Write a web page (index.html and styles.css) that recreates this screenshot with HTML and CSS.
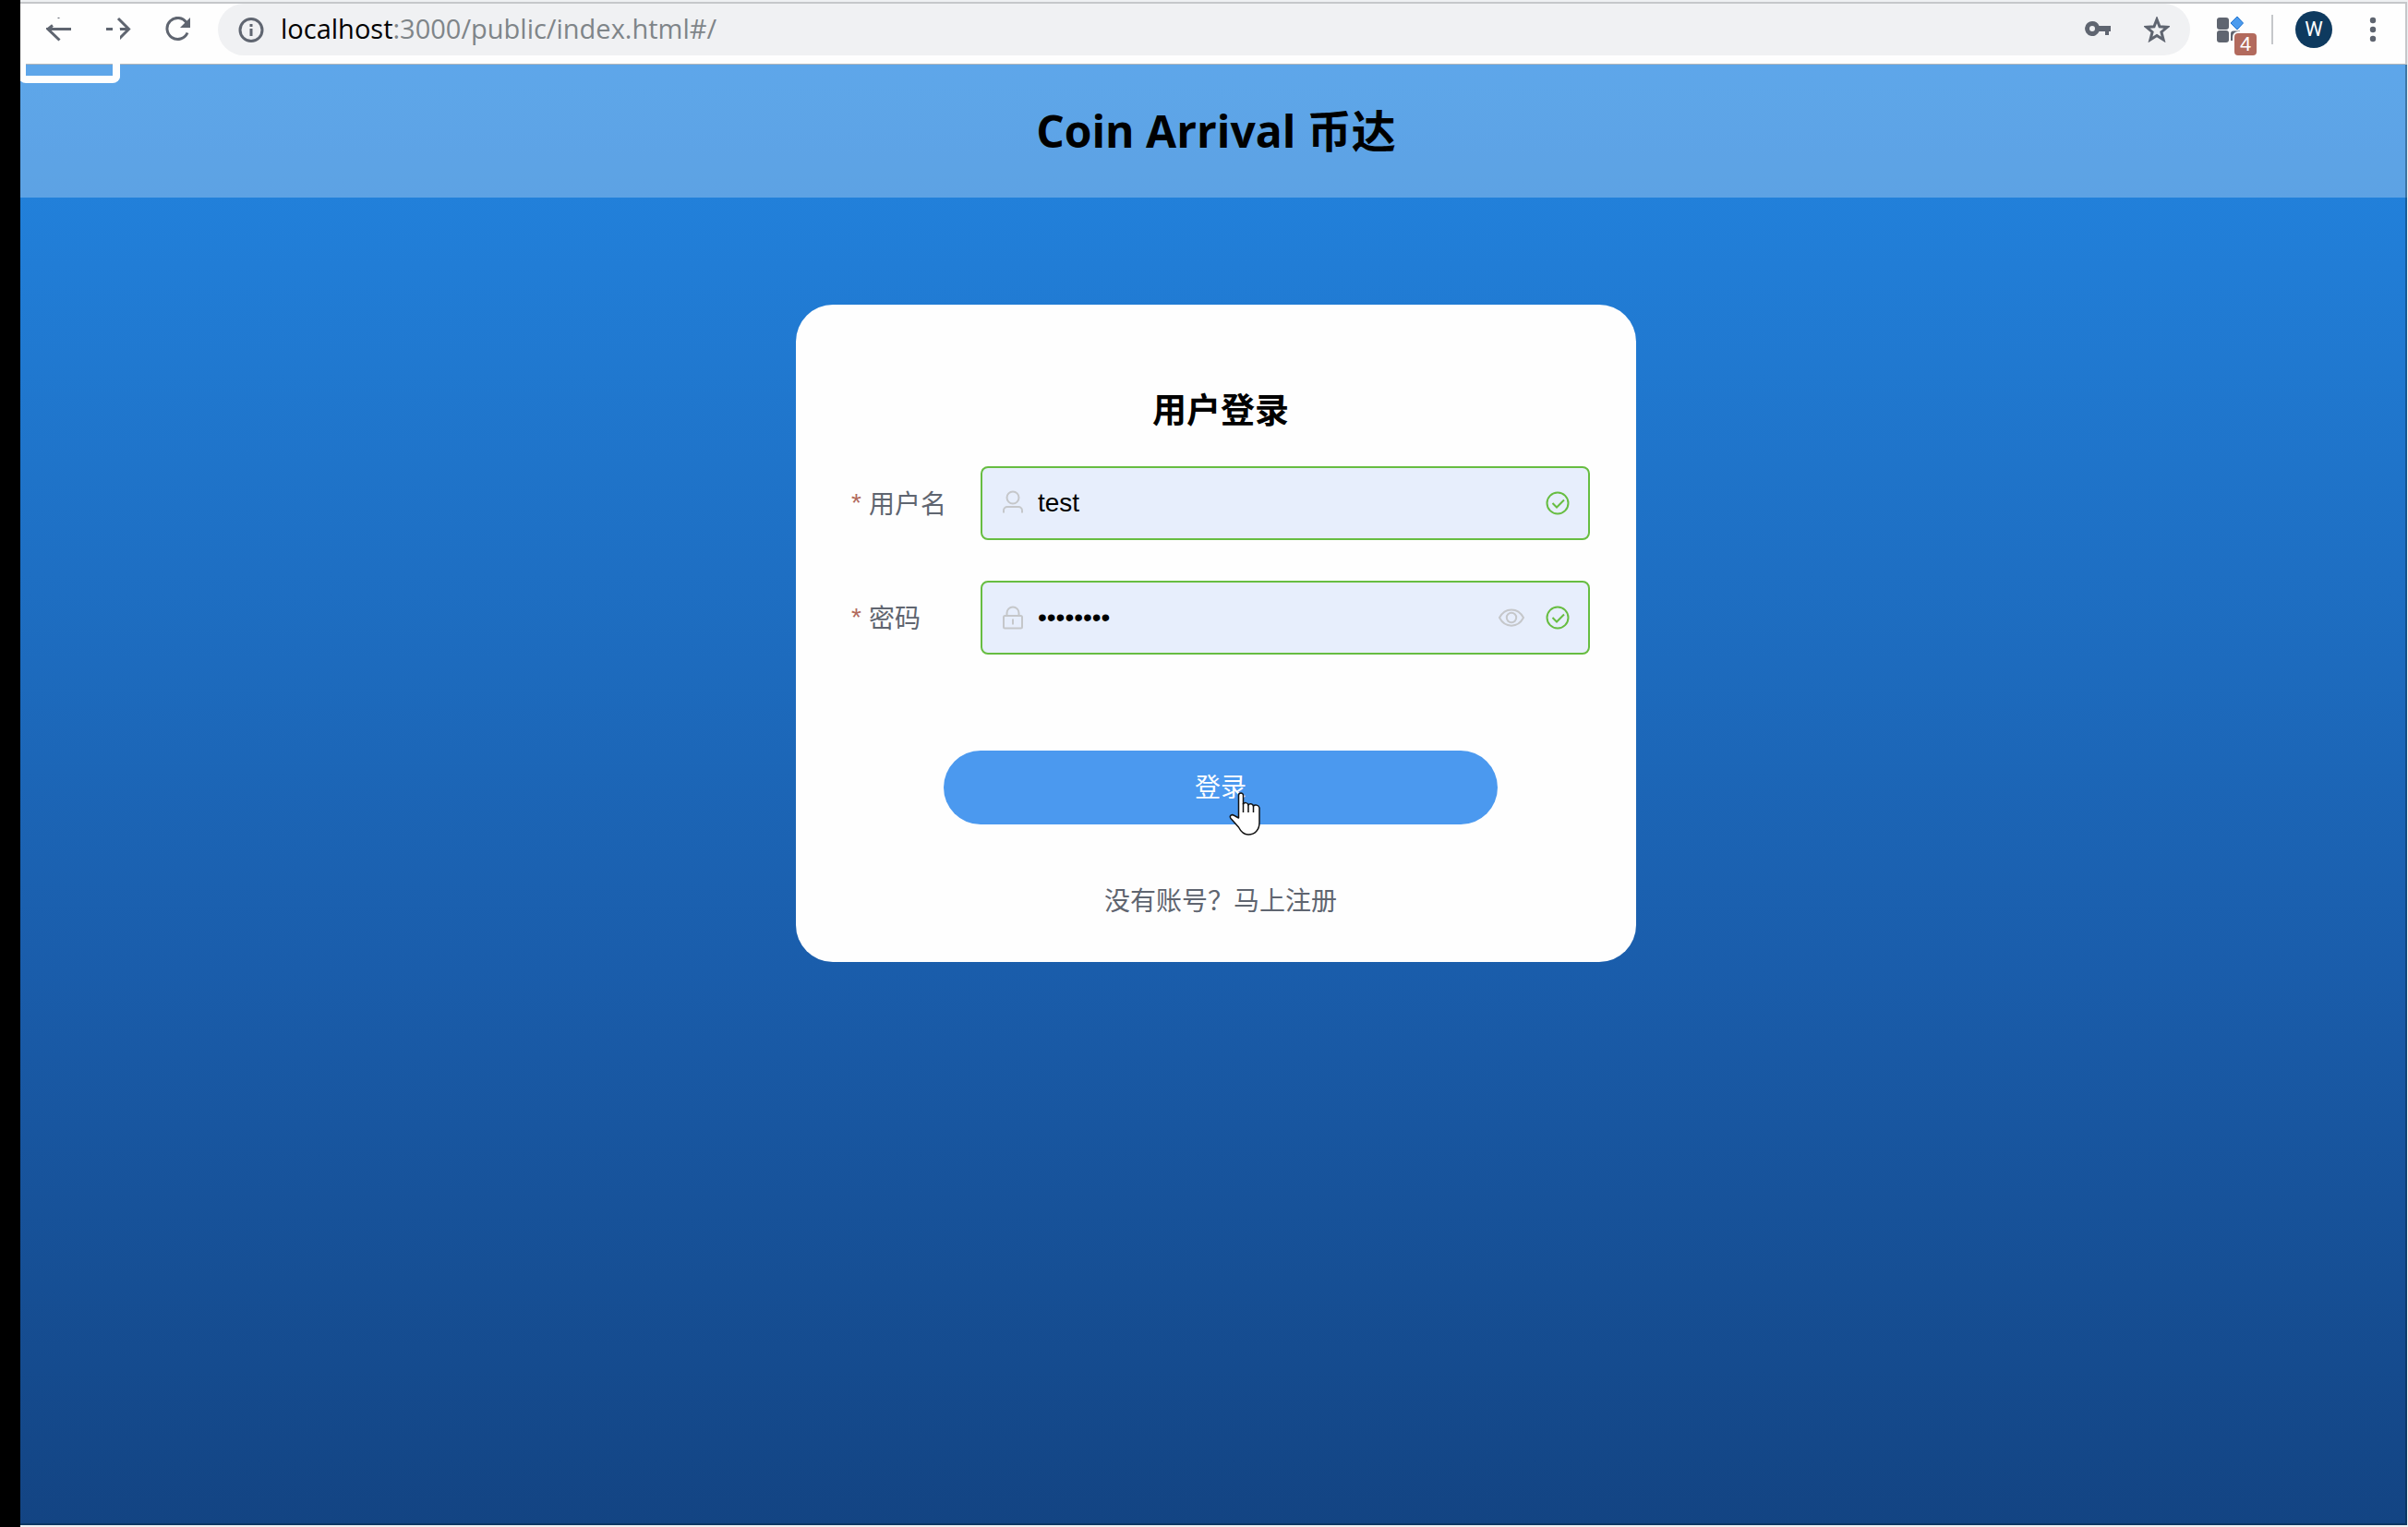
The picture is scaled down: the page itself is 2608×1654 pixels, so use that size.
FILE: index.html
```html
<!DOCTYPE html>
<html lang="zh-CN">
<head>
<meta charset="utf-8">
<title>Coin Arrival 币达</title>
<meta name="viewport" content="width=device-width, initial-scale=1">
<link rel="stylesheet" href="styles.css">
</head>
<body>
<div class="window">
  <div class="toolbar">
    <nav class="nav" aria-label="Browser">
      <button class="icon-button" type="button" aria-label="Back">
        <svg class="icon" viewBox="0 0 28 28"><path d="M27 13.500H2L14.500 25.500M2 13.500l5-4" class="line"/><path d="M12.500 1.500h2" class="hair"/></svg>
      </button>
      <button class="icon-button" type="button" aria-label="Forward">
        <svg class="icon" viewBox="0 0 28 28"><path d="M1 13.500h25M14 2l11.500 11.500L14 25" class="line"/></svg>
      </button>
      <button class="icon-button" type="button" aria-label="Reload">
        <svg class="icon" viewBox="0 0 28 28"><path d="M24 6.500A11.500 11.500 0 1 0 25 17.500" class="line"/><path d="M28 1V12H17z"/></svg>
      </button>
    </nav>
    <div class="address">
      <svg class="icon" viewBox="0 0 28 28"><circle cx="14" cy="14.500" r="12" class="line"/><path d="M12.500 8h3v3h-3zM12.500 13h3v8h-3z"/></svg>
      <span class="url"><span class="host">localhost</span>:3000/public/index.html#/</span>
      <button class="icon-button" type="button" aria-label="Passwords">
        <svg class="icon" viewBox="0 0 28 28"><path fill-rule="evenodd" d="M8 5a8 8 0 1 0 7.500 11H22v4h4v-4h2v-6H15.500A8 8 0 0 0 8 5zm0 5a3 3 0 1 1 0 6 3 3 0 0 1 0-6z"/></svg>
      </button>
      <button class="icon-button" type="button" aria-label="Bookmark">
        <svg class="icon" viewBox="0 0 28 28"><path d="M14 3l3 7.800 8.300.6-6.400 5.300 2.200 8.300-7.100-4.500L6.900 25l2.200-8.300-6.400-5.300 8.300-.6z" class="line"/></svg>
      </button>
    </div>
    <button class="extension" type="button" aria-label="Extension">
      <svg class="extension-icon" viewBox="0 0 46 56"><rect x="1" y="15" width="13" height="13" rx="3"/><rect x="1" y="29" width="13" height="13" rx="3"/><path d="M26 29.500h-7a3 3 0 0 0-3 3V40h3v-7h7z"/><path d="M23 14l6.500 7-6.500 7-7-7z" fill="#4b9bee" stroke="#1f73d0" stroke-linejoin="round"/></svg>
      <span class="count">4</span>
    </button>
    <span class="divider"></span>
    <button class="avatar" type="button">W</button>
    <button class="menu" type="button" aria-label="Menu">
      <svg class="menu-icon" viewBox="0 0 8 28"><circle cx="4" cy="4" r="3.200"/><circle cx="4" cy="14" r="3.200"/><circle cx="4" cy="24" r="3.200"/></svg>
    </button>
  </div>
  <div class="page">
    <header class="banner"><h1 class="brand">Coin Arrival 币达</h1></header>
    <main class="main">
      <form class="card">
        <h2 class="title">用户登录</h2>
        <div class="row">
          <label class="label" for="username"><span class="required">*</span>用户名</label>
          <div class="field">
            <svg class="field-icon" viewBox="0 0 28 28"><circle cx="14" cy="8" r="6.500"/><path d="M4 24.500v-2.500a4 4 0 0 1 4-4h12a4 4 0 0 1 4 4v2.500"/></svg>
            <input class="input" id="username" type="text" value="test">
            <svg class="field-icon valid" viewBox="0 0 28 28"><circle cx="14" cy="14" r="11.500"/><path d="M8.500 14l4.500 4.500 8-8"/></svg>
          </div>
        </div>
        <div class="row">
          <label class="label" for="password"><span class="required">*</span>密码</label>
          <div class="field">
            <svg class="field-icon" viewBox="0 0 28 28"><rect x="4" y="12" width="20" height="13.500" rx="1.500"/><path d="M7.500 12V9a6.500 6.500 0 0 1 13 0v3M14 15.500v6"/></svg>
            <input class="input" id="password" type="password" value="password">
            <svg class="field-icon" viewBox="0 0 28 28"><path d="M1 14C7 2.500 21 2.500 27 14 21 25.500 7 25.500 1 14z"/><circle cx="14" cy="14" r="5.200"/></svg>
            <svg class="field-icon valid" viewBox="0 0 28 28"><circle cx="14" cy="14" r="11.500"/><path d="M8.500 14l4.500 4.500 8-8"/></svg>
          </div>
        </div>
        <div class="actions">
          <button class="submit" type="button">登录</button>
          <svg class="pointer" viewBox="0 0 36 48"><path d="M10.500 28V3.500a2.500 2.500 0 0 1 5 0V13c1-2 5-2 5.500 1 1-2 5-1.500 5.500 1 1.500-2 6-1 6.500 2V33c0 8-5 13-12 13-5 0-8-3-10.500-8L2 28.500c-2-3 1-5 4-3z" fill="#fff" stroke="#111" stroke-width="1.500" stroke-linejoin="round"/><path d="M15.500 12v10M21 13v9M26.500 14v8" fill="none" stroke="#111" stroke-width="1.500"/></svg>
        </div>
        <a class="register" href="#/register">没有账号？马上注册</a>
      </form>
    </main>
  </div>
  <span class="ghost"></span>
</div>
</body>
</html>
```
FILE: styles.css
```css
* {
  box-sizing: border-box;
}

body {
  margin: 0;
  min-height: 100vh;
  display: flex;
  padding: 2px 1px 2px 0;
  border-left: 22px solid #000;
  background: #eef0f2;
  color: #000;
  font-family: "Open Sans", "Noto Sans CJK SC", sans-serif;
}

button {
  padding: 0;
  border: 0;
  background: none;
  font: inherit;
  color: inherit;
}

svg {
  display: block;
  flex: none;
}

.window {
  position: relative;
  flex: 1;
  min-width: 0;
  display: flex;
  flex-direction: column;
}

/* Browser toolbar */

.toolbar {
  display: flex;
  align-items: center;
  padding: 0 31px 10px 28px;
  border: solid #c5c7ca;
  border-width: 2px 2px 0 0;
  background: #fefefe;
  box-shadow: inset 0 -1px #b4b6b9;
}

.nav {
  display: flex;
  gap: 36px;
  margin-right: 30px;
}

.icon {
  width: 28px;
  height: 28px;
  fill: #5f6570;
}

.icon .line {
  fill: none;
  stroke: #5f6570;
  stroke-width: 3;
}

.icon .hair {
  stroke: #5f6570;
  stroke-width: 1;
}

.address {
  flex: 1;
  display: flex;
  align-items: center;
  height: 56px;
  padding: 0 22px;
  border-radius: 28px;
  background: #f0f1f3;
}

.url {
  flex: 1;
  margin-left: 18px;
  color: #7f8589;
  font-size: 29px;
  line-height: 54px;
  padding-bottom: 2px;
}

.host {
  color: #000;
}

.address .icon-button + .icon-button {
  margin-left: 36px;
}

.extension {
  position: relative;
  margin: 0 14px 0 28px;
}

.extension-icon {
  width: 46px;
  height: 56px;
  fill: #5f6570;
}

.count {
  position: absolute;
  right: 2px;
  bottom: 0;
  width: 24px;
  height: 24px;
  border-radius: 4px;
  background: #b26a5d;
  box-shadow: 0 0 0 2px #fefefe;
  color: #fff;
  font: 22px/24px "Liberation Sans", sans-serif;
  text-align: center;
}

.divider {
  width: 2px;
  height: 32px;
  background: #c5c7ca;
}

.avatar {
  width: 40px;
  height: 40px;
  margin: 0 40px 0 24px;
  border-radius: 50%;
  background: #0e3a5f;
  color: #fff;
  font: 22px/40px Roboto, sans-serif;
}

.menu-icon {
  width: 8px;
  height: 28px;
  fill: #5f6570;
}

/* Stray outline left over the toolbar's corner */

.ghost {
  position: absolute;
  top: 22px;
  left: -2px;
  width: 110px;
  height: 66px;
  border: 8px solid #fefefe;
  border-top: 0;
  border-radius: 8px;
  pointer-events: none;
}

/* Page */

.page {
  position: relative;
  flex: 1;
  background: linear-gradient(#2386e2, #1a5dab 62%, #134483);
}

.page::after {
  content: "";
  position: absolute;
  inset: 0;
  border: solid rgba(0, 30, 40, 0.35);
  border-width: 0 2px 2px 0;
  pointer-events: none;
}

.banner {
  padding-left: 5px;
  background: rgba(255, 255, 255, 0.27);
}

.brand {
  margin: 0;
  font-size: 48px;
  line-height: 144px;
  text-align: center;
}

.main {
  display: flex;
  justify-content: center;
  padding: 116px 0 40px 5px;
}

.card {
  width: 910px;
  display: flex;
  flex-direction: column;
  padding: 88px 50px 47px 60px;
  border-radius: 40px;
  background: #fefefe;
}

.title {
  margin: 0 0 35px;
  font-size: 37px;
  line-height: 52px;
  text-align: center;
}

.row {
  display: flex;
  margin-bottom: 44px;
}

.label {
  display: flex;
  align-items: center;
  width: 140px;
  height: 80px;
  color: #5f6570;
  font-size: 28px;
  line-height: 40px;
}

.required {
  margin-right: 8px;
  color: #b26a5d;
  font-family: "Liberation Sans", sans-serif;
}

.field {
  flex: 1;
  min-width: 0;
  height: 80px;
  display: flex;
  align-items: center;
  padding: 0 19px;
  border: 2px solid #67bd41;
  border-radius: 8px;
  background: #e7eefc;
}

.input {
  flex: 1;
  min-width: 0;
  margin-left: 13px;
  padding: 0;
  border: 0;
  outline: 0;
  background: none;
  color: #000;
  font: 28px "Liberation Sans", sans-serif;
}

.field-icon {
  width: 28px;
  height: 28px;
  fill: none;
  stroke: #c5c7ca;
  stroke-width: 2;
}

.valid {
  margin-left: 22px;
  stroke: #67bd41;
}

.actions {
  position: relative;
  width: 600px;
  margin: 60px auto 62px;
}

.submit {
  display: block;
  width: 100%;
  height: 80px;
  padding-bottom: 4px;
  border-radius: 40px;
  background: #4b99ef;
  color: #fff;
  font-size: 28px;
}

.pointer {
  position: absolute;
  top: 45px;
  left: 309px;
  width: 36px;
  height: 48px;
}

.register {
  align-self: center;
  color: #5f6570;
  font-size: 28px;
  line-height: 40px;
  text-decoration: none;
}
```
